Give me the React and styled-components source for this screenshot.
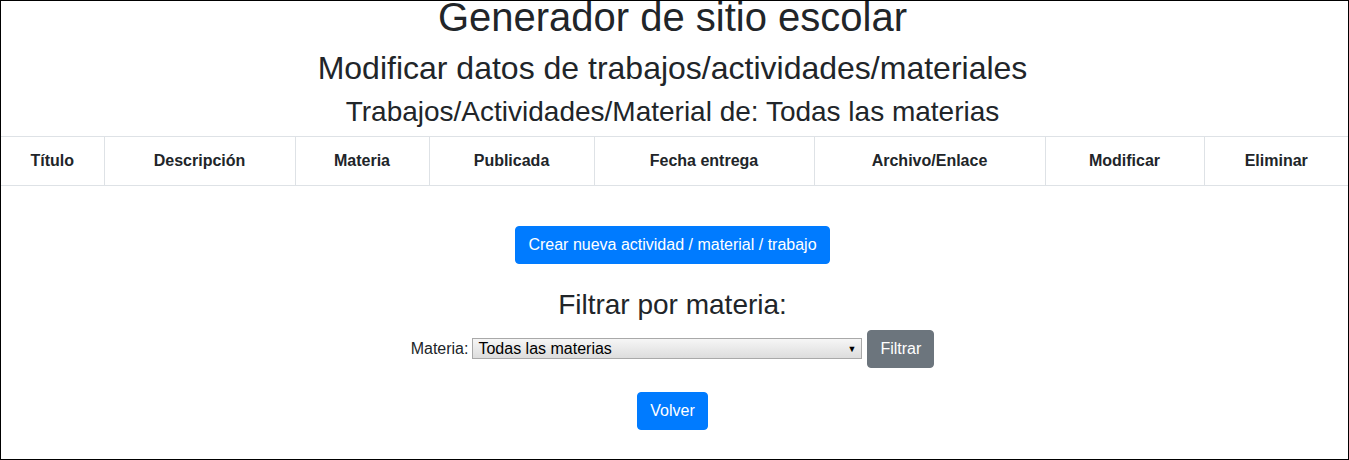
import React from 'react';
import styled, { createGlobalStyle, css } from 'styled-components';

const GlobalStyle = createGlobalStyle`
    html, body {
        margin: 0;
        padding: 0;
        background: #fff;
    }
    body {
        font-family: "Liberation Sans", Arial, sans-serif;
        font-size: 16px;
        line-height: 1.5;
        color: #212529;
    }
`;

// centred blocks sit a little left of the page centre
const centred = css`
    padding-right: 4px;
`;

const Page = styled.div`
    box-sizing: border-box;
    height: 460px;
    border: 1px solid #000;
    overflow: hidden;
    text-align: center;
`;

const Title = styled.h1`
    ${centred}
    font-size: 40px;
    font-weight: 400;
    line-height: 1.2;
    margin: -8px 0 8px;
`;

const SubTitle = styled.h2`
    ${centred}
    font-size: 32px;
    font-weight: 400;
    line-height: 1.2;
    margin: 0 0 8px;
`;

const Heading = styled.h3`
    ${centred}
    font-size: 28px;
    font-weight: 400;
    line-height: 1.2;
    margin: 0 0 ${props => props.$bottom || '8px'};
`;

const Table = styled.table`
    width: 100%;
    table-layout: fixed;
    border-collapse: collapse;
    margin-bottom: 40px;
`;

const Th = styled.th`
    padding: 12px;
    font-weight: 700;
    line-height: 24px;
    text-align: center;
    border: 1px solid #dee2e6;
    white-space: nowrap;

    &:first-child {
        border-left: none;
    }
    &:last-child {
        border-right: none;
    }
`;

const Button = styled.button`
    display: inline-block;
    font-family: inherit;
    font-size: 16px;
    line-height: 24px;
    padding: 6px 12px;
    border: 1px solid ${props => props.$color};
    border-radius: 4px;
    background: ${props => props.$color};
    color: #fff;
    cursor: pointer;
`;

const ButtonRow = styled.div`
    ${centred}
    display: flex;
    justify-content: center;
    margin-bottom: ${props => props.$bottom || 0};
`;

const FilterForm = styled.form`
    ${centred}
    display: flex;
    justify-content: center;
    align-items: center;
    margin: 0 0 24px;
`;

const Label = styled.label`
    margin-right: 4px;
`;

const SelectWrap = styled.span`
    position: relative;
    display: inline-block;
    margin-right: 5px;
`;

const Select = styled.select`
    appearance: none;
    -webkit-appearance: none;
    box-sizing: border-box;
    width: 390px;
    height: 21px;
    padding: 0 20px 0 5px;
    font-family: inherit;
    font-size: 16px;
    line-height: 19px;
    color: #000;
    border: 1px solid #a9a9a9;
    border-radius: 0;
    background: linear-gradient(#f6f6f6, #dddddd);
    display: block;
`;

const Arrow = styled.span`
    position: absolute;
    right: 6px;
    top: 50%;
    transform: translateY(-50%);
    font-size: 9px;
    line-height: 1;
    color: #000;
    pointer-events: none;
`;

const columns = [
    ['Título', 103],
    ['Descripción', 191],
    ['Materia', 134],
    ['Publicada', 165],
    ['Fecha entrega', 220],
    ['Archivo/Enlace', 231],
    ['Modificar', 159],
    ['Eliminar', 144],
];

export default function App() {
    return (
        <Page>
            <GlobalStyle />
            <Title>Generador de sitio escolar</Title>
            <SubTitle>Modificar datos de trabajos/actividades/materiales</SubTitle>
            <Heading $bottom="7px">Trabajos/Actividades/Material de: Todas las materias</Heading>

            <Table>
                <colgroup>
                    {columns.map(([name, w]) => <col key={name} style={{ width: w }} />)}
                </colgroup>
                <thead>
                    <tr>
                        {columns.map(([name]) => <Th key={name}>{name}</Th>)}
                    </tr>
                </thead>
                <tbody></tbody>
            </Table>

            <ButtonRow $bottom="24px">
                <Button type="button" $color="#007bff">Crear nueva actividad / material / trabajo</Button>
            </ButtonRow>

            <Heading>Filtrar por materia:</Heading>
            <FilterForm onSubmit={e => e.preventDefault()}>
                <Label htmlFor="materia">Materia:</Label>
                <SelectWrap>
                    <Select id="materia" defaultValue="todas">
                        <option value="todas">Todas las materias</option>
                    </Select>
                    <Arrow>▼</Arrow>
                </SelectWrap>
                <Button type="submit" $color="#6c757d">Filtrar</Button>
            </FilterForm>

            <ButtonRow>
                <Button type="button" $color="#007bff">Volver</Button>
            </ButtonRow>
        </Page>
    );
}
